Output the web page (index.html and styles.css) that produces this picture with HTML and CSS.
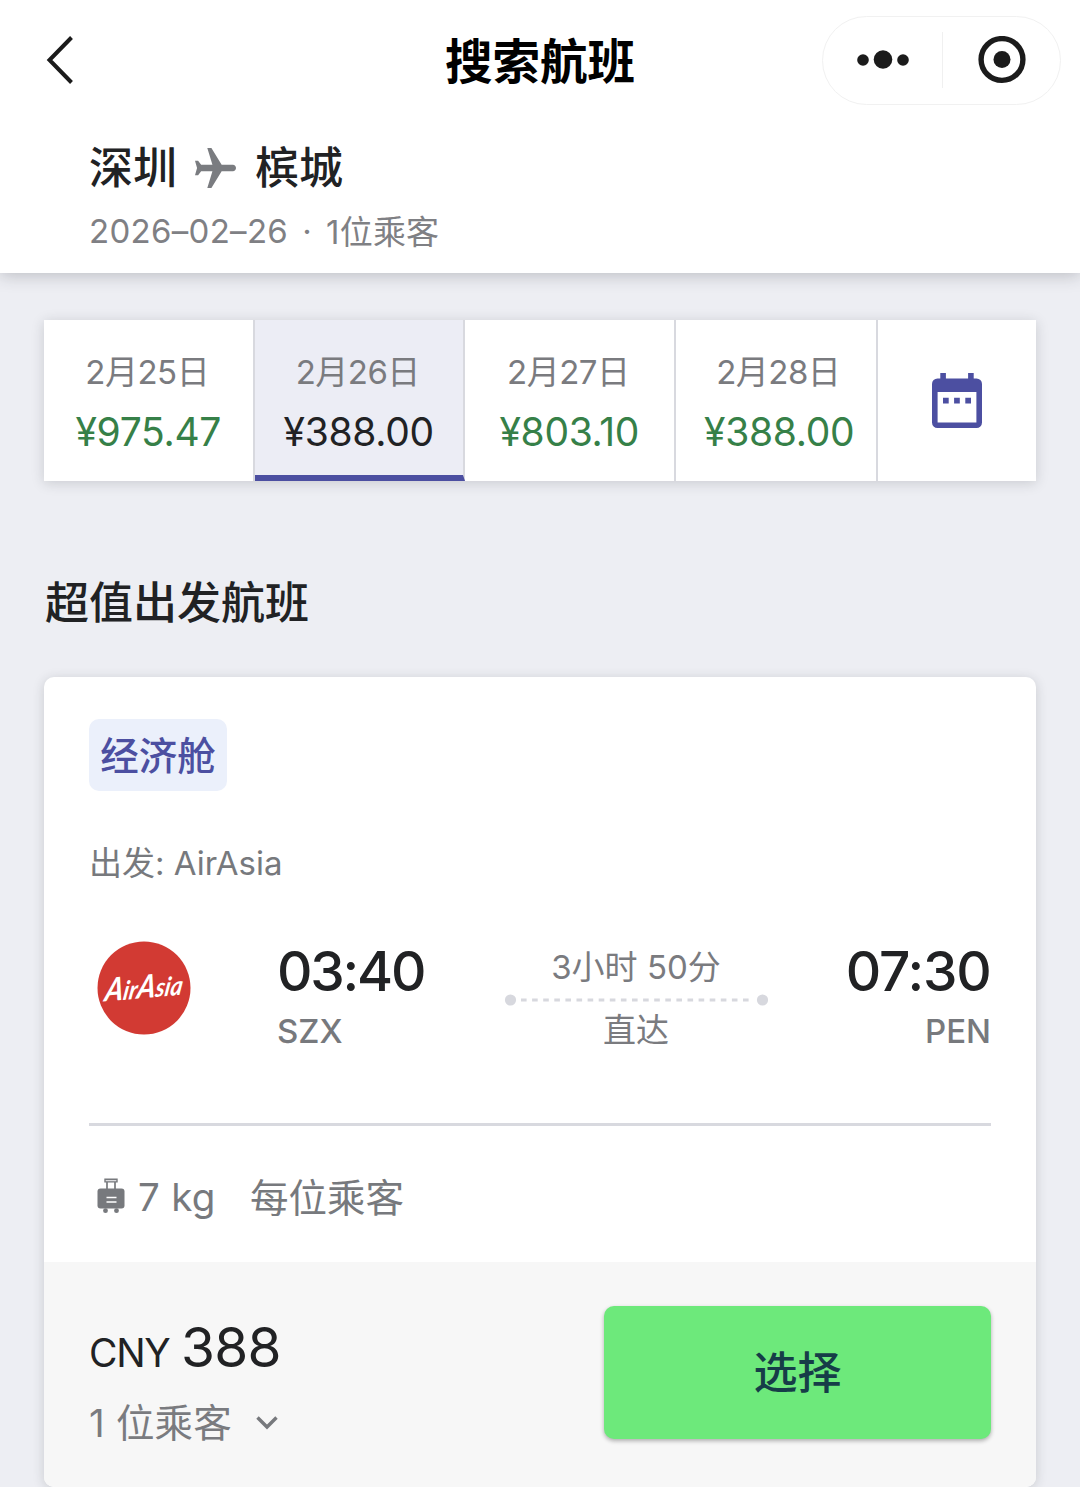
FILE: index.html
```html
<!DOCTYPE html>
<html lang="zh-CN">
<head>
<meta charset="utf-8">
<title>搜索航班</title>
<link rel="stylesheet" href="styles.css">
</head>
<body>
<header class="header">
  <nav class="navbar">
    <svg class="back" viewBox="0 0 30 50"><path d="M26.500 2.500 4.500 25l22 22.500" fill="none" stroke="#1b1b1b" stroke-width="4"/></svg>
    <h1 class="title">搜索航班</h1>
    <div class="capsule">
      <svg class="more" viewBox="0 0 52 20" fill="#1b1b1b"><circle cx="6" cy="10" r="5.800"/><circle cx="26" cy="9.500" r="9.300"/><circle cx="46" cy="10" r="5.800"/></svg>
      <span class="capsule-line"></span>
      <svg class="close" viewBox="0 0 48 48"><circle cx="24" cy="23.500" r="20.900" fill="none" stroke="#1b1b1b" stroke-width="5.400"/><circle cx="24" cy="23.500" r="8.500" fill="#1b1b1b"/></svg>
    </div>
  </nav>
  <div class="route">
    <span>深圳</span>
    <svg class="plane" viewBox="2 2.500 20 19" preserveAspectRatio="none"><path fill="#7a7c80" d="M22 12c0-.83-.67-1.500-1.500-1.500H15l-5-8H8l2.500 8H5L3.500 8.500H2L3 12l-1 3.500h1.500L5 13.500h5.500l-2.500 8h2l5-8h5.500c.83 0 1.500-.67 1.500-1.500z"/></svg>
    <span>槟城</span>
  </div>
  <div class="trip"><span class="trip-date">2026–02–26</span><span class="trip-dot">·</span><span class="trip-people">1位乘客</span></div>
</header>
<main class="content">
  <section class="dates">
    <div class="date"><span class="day">2月25日</span><span class="fare">¥975.47</span></div>
    <div class="date date-active"><span class="day">2月26日</span><span class="fare">¥388.00</span></div>
    <div class="date"><span class="day">2月27日</span><span class="fare">¥803.10</span></div>
    <div class="date date-last"><span class="day">2月28日</span><span class="fare">¥388.00</span></div>
    <div class="calendar">
      <svg viewBox="0 0 50 55" width="50" height="55"><path fill="#4c4fa1" fill-rule="evenodd" d="M8.300 0h5.600v5.500h22.200V0h5.600v5.500H44.500a5.500 5.500 0 0 1 5.500 5.500v38.500a5.500 5.500 0 0 1-5.500 5.500h-39A5.500 5.500 0 0 1 0 49.500V11a5.500 5.500 0 0 1 5.500-5.500h2.800zM5.600 19v30.500h38.800V19zM11 24.700h5.700v5.700H11zm11.100 0h5.700v5.700h-5.700zm11.200 0H39v5.700h-5.700z"/></svg>
    </div>
  </section>
  <h2 class="section-title">超值出发航班</h2>
  <article class="card">
    <div class="card-body">
      <span class="tag">经济舱</span>
      <p class="carrier">出发: AirAsia</p>
      <div class="flight">
        <svg class="logo" viewBox="0 0 94 94"><circle cx="47" cy="47" r="46.500" fill="#d23a33"/><text class="logo-text" x="47" y="57" text-anchor="middle" textLength="78" lengthAdjust="spacingAndGlyphs" transform="rotate(-5 47 47) translate(12 0) skewX(-14)"><tspan class="logo-cap">A</tspan>ir<tspan class="logo-cap">A</tspan>sia</text></svg>
        <div class="stop">
          <span class="time">03:40</span><span class="code">SZX</span>
        </div>
        <div class="leg">
          <span class="leg-text">3小时 50分</span>
          <svg class="leg-line" viewBox="0 0 264 12"><g fill="#d7d8de"><circle cx="6.500" cy="6" r="5.600"/><circle cx="258.500" cy="6" r="5.600"/></g><path d="M17 6h230" stroke="#d7d8de" stroke-width="2.800" stroke-dasharray="5.600 5.500"/></svg>
          <span class="leg-text leg-type">直达</span>
        </div>
        <div class="stop stop-end">
          <span class="time">07:30</span><span class="code">PEN</span>
        </div>
      </div>
      <div class="baggage">
        <svg class="bag" viewBox="0 0 28 36"><path d="M8 1.200h12v2.700H8z" fill="#dcdcde" stroke="#77797d" stroke-width="1.400"/><path d="M10 4v7M18 4v7" stroke="#77797d" stroke-width="1.700"/><rect x=".5" y="10.500" width="27" height="20" rx="3" fill="#77797d"/><circle cx="8.500" cy="32.700" r="2.400" fill="#77797d"/><circle cx="19.500" cy="32.700" r="2.400" fill="#77797d"/><path d="M9.500 19.500h10M9.500 24h10" stroke="#fff" stroke-width="1.700"/></svg>
        <span class="weight">7 kg</span><span class="per">每位乘客</span>
      </div>
    </div>
    <footer class="card-footer">
      <div class="price">
        <div class="amount"><span class="currency">CNY</span><span class="value">388</span></div>
        <div class="passengers"><span class="count">1 位乘客</span><svg class="chevron" viewBox="0 0 22 14"><path d="M1.500 1.500 11 11l9.500-9.500" fill="none" stroke="#77797d" stroke-width="3.400"/></svg></div>
      </div>
      <button class="select">选择</button>
    </footer>
  </article>
</main>
</body>
</html>
```
FILE: styles.css
```css
* { box-sizing: border-box; }
body {
  margin: 0;
  width: 1080px;
  height: 1487px;
  overflow: hidden;
  background: #edeef3;
  color: #212224;
  font-family: Inter, "Noto Sans CJK SC", sans-serif;
}
h1, h2, p { margin: 0; font-weight: 500; }
svg { display: block; flex: none; }
span { white-space: nowrap; }
.header {
  height: 273px;
  background: #fff;
  box-shadow: 0 2px 16px rgba(40, 42, 50, .26);
}
.navbar {
  display: grid;
  grid-template-columns: 258px 1fr 258px;
  align-items: center;
  height: 120px;
}
.back { width: 30px; height: 50px; margin-left: 45px; }
.title {
  padding-top: 4px;
  text-align: center;
  font-size: 47.5px;
  line-height: 60px;
  font-weight: 700;
  color: #000;
}
.capsule {
  display: flex;
  align-items: center;
  width: 239px;
  height: 89px;
  border: 1.500px solid #f1f1f1;
  border-radius: 45px;
  padding-left: 33.500px;
}
.more { width: 52px; height: 20px; }
.capsule-line { width: 1.500px; height: 56px; margin: 0 34.500px 0 33px; background: #f0f0f0; }
.close { width: 48px; height: 48px; }
.route {
  display: flex;
  align-items: center;
  height: 64px;
  margin-top: 13px;
  padding-left: 89px;
  font-size: 44px;
  font-weight: 500;
}
.plane { width: 41px; height: 40px; margin: 6px 19px 0 18px; }
.trip {
  display: flex;
  align-items: center;
  height: 60px;
  padding-left: 89px;
  margin-top: 4px;
  font-size: 33px;
  color: #7f8084;
}
.trip-date { letter-spacing: .3px; }
.trip-dot { width: 38px; text-align: center; }
.trip-people { padding-bottom: 3px; letter-spacing: .2px; }
.content { padding: 47px 44px 0; }
.dates {
  display: flex;
  height: 161px;
  background: #fff;
  box-shadow: 0 2px 12px rgba(40, 42, 50, .18);
}
.date {
  display: flex;
  flex-direction: column;
  align-items: center;
  width: 210.500px;
  padding-top: 28px;
  border-right: 2.500px solid #d8d9df;
}
.date-active {
  background: #ecedf5;
  border-bottom: 6px solid #4c4fa1;
  color: #212224;
}
.date-last { width: 202.500px; padding-left: 7px; }
.day { font-size: 33px; line-height: 48px; margin-right: 2px; color: #7a7b7f; letter-spacing: -.5px; }
.fare { font-size: 39px; line-height: 48px; margin-top: 12px; color: #368048; letter-spacing: -.3px; }
.date-active .fare { color: #212224; }
.calendar { flex: 1; display: flex; align-items: center; justify-content: center; }
.section-title { padding-left: 1px; font-size: 44px; line-height: 60px; margin-top: 92px; }
.card {
  height: 810px;
  margin-top: 44px;
  border-radius: 10px;
  background: #fff;
  overflow: hidden;
  box-shadow: 0 2px 12px rgba(40, 42, 50, .18);
}
.card-body { height: 585px; padding: 42px 45px 0; }
.tag {
  display: block;
  width: 138px;
  height: 72px;
  border-radius: 10px;
  background: #ebf0fb;
  color: #4c4fa1;
  font-size: 38.500px;
  line-height: 74px;
  font-weight: 500;
  text-align: center;
}
.carrier {
  margin-top: 48px;
  font-size: 33px;
  line-height: 48px;
  font-weight: 400;
  color: #77797d;
}
.flight {
  display: flex;
  height: 239px;
  border-bottom: 3px solid #d8d9df;
}
.logo { width: 94px; height: 94px; margin: 54px 0 0 8px; }
.logo-text { font: italic 700 26px Lato, sans-serif; fill: #fff; }
.logo-cap { font-size: 32px; }
.stop {
  display: flex;
  flex-direction: column;
  width: 150px;
  padding-top: 54px;
  margin-left: 86px;
}
.time { font-size: 55px; line-height: 60px; font-weight: 500; letter-spacing: -2.200px; }
.code { font-size: 33px; line-height: 48px; margin-top: 6px; font-weight: 500; color: #77797d; }
.leg {
  display: flex;
  flex-direction: column;
  align-items: center;
  width: 264px;
  margin-left: 77px;
  padding-top: 56px;
  color: #7a7b7f;
}
.leg-text { font-size: 33px; line-height: 48px; }
.leg-line { width: 264px; height: 12px; margin: 3px 0 1px; }
.leg-type { margin-top: -1px; }
.stop-end { align-items: flex-end; margin-left: auto; }
.stop-end .time { letter-spacing: -1.200px; margin-right: .5px; }
.baggage {
  display: flex;
  align-items: center;
  height: 142px;
  padding-left: 8px;
  font-size: 38.500px;
  color: #77797d;
}
.bag { width: 28px; height: 36px; margin-bottom: 2px; }
.weight { width: 112px; margin-left: 13px; letter-spacing: .3px; }
.per { padding-bottom: 4px; }
.card-footer {
  display: flex;
  justify-content: space-between;
  height: 225px;
  padding: 44px 45px 0 45px;
  background: #f7f7f7;
}
.amount { display: flex; align-items: baseline; height: 84px; line-height: 83px; }
.currency { font-size: 39px; width: 92px; letter-spacing: -1.300px; }
.value { font-size: 55px; letter-spacing: -.8px; }
.passengers { display: flex; align-items: center; height: 64px; font-size: 38.500px; color: #7a7b7f; }
.count { padding-bottom: 4px; letter-spacing: .2px; }
.chevron { width: 22px; height: 14px; margin: 2px 0 0 23.500px; }
.select {
  width: 387px;
  height: 133px;
  border: 0;
  border-radius: 10px;
  background: #6de97b;
  box-shadow: 0 2px 4px rgba(0, 0, 0, .3);
  color: #163d48;
  font: 500 44px/1 Inter, "Noto Sans CJK SC", sans-serif;
}
```
